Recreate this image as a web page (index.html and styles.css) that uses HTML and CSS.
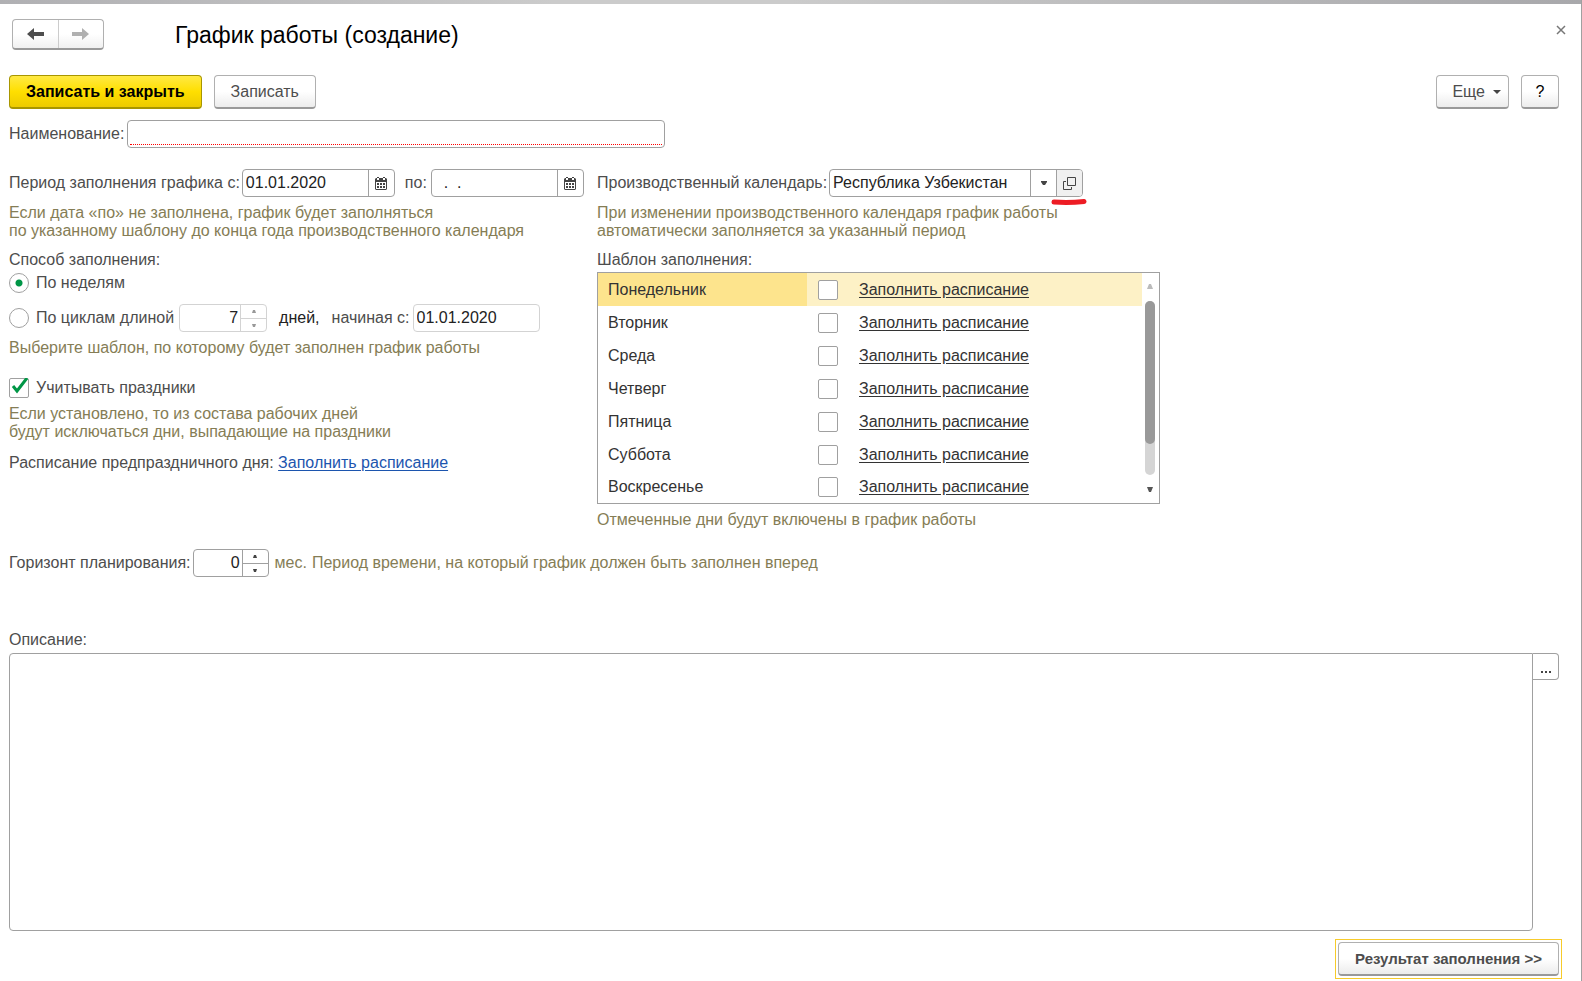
FILE: index.html
```html
<!DOCTYPE html>
<html lang="ru">
<head>
<meta charset="utf-8">
<title>График работы (создание)</title>
<link rel="stylesheet" href="styles.css">
</head>
<body>
<main class="window">
  <header class="titlebar">
    <div class="history">
      <button class="history-btn" type="button" aria-label="Назад"><svg width="18" height="14" viewBox="0 0 18 14"><path d="M0 7 7 1V5H17V9H7V13Z" fill="#4d4d4d"/></svg></button>
      <button class="history-btn" type="button" aria-label="Вперед"><svg width="18" height="14" viewBox="0 0 18 14"><path d="M17 7 10 1V5H0V9H10V13Z" fill="#b0b0b0"/></svg></button>
    </div>
    <h1 class="title">График работы (создание)</h1>
    <button class="close" type="button" aria-label="Закрыть"><svg width="10" height="10" viewBox="0 0 10 10"><path d="M1 1 9 9M9 1 1 9" stroke="#777" stroke-width="1.500"/></svg></button>
  </header>

  <div class="commands">
    <button class="btn btn-primary" type="button">Записать и закрыть</button>
    <button class="btn" type="button">Записать</button>
    <button class="btn btn-more" type="button">Еще <svg width="8" height="4" viewBox="0 0 8 4"><path d="M0 0H8L4 4Z" fill="#444"/></svg></button>
    <button class="btn btn-help" type="button">?</button>
  </div>

  <div class="row name-row">
    <label for="name">Наименование:</label>
    <div class="field name-field"><input class="required" id="name" type="text"></div>
  </div>

  <div class="columns">
    <section class="left">
      <div class="row">
        <label for="from">Период заполнения графика с:</label>
        <div class="field date-field">
          <input id="from" type="text" value="01.01.2020">
          <button class="cell" type="button" aria-label="Выбрать дату начала"><svg width="12" height="13" viewBox="0 0 12 13"><path fill-rule="evenodd" d="M1 1H2V0H4V1H8V0H10V1H11L12 2V12L11 13H1L0 12V2ZM1 5V12H11V5ZM2 1V3H4V1ZM8 1V3H10V1Z" fill="#444"/><path d="M2 6H4V8H2ZM5 6H7V8H5ZM8 6H10V8H8ZM2 9H4V11H2ZM5 9H7V11H5ZM8 9H10V11H8Z" fill="#444"/></svg></button>
        </div>
        <label class="to-label" for="to">по:</label>
        <div class="field date-field">
          <input id="to" type="text" value="  .  .">
          <button class="cell" type="button" aria-label="Выбрать дату окончания"><svg width="12" height="13" viewBox="0 0 12 13"><path fill-rule="evenodd" d="M1 1H2V0H4V1H8V0H10V1H11L12 2V12L11 13H1L0 12V2ZM1 5V12H11V5ZM2 1V3H4V1ZM8 1V3H10V1Z" fill="#444"/><path d="M2 6H4V8H2ZM5 6H7V8H5ZM8 6H10V8H8ZM2 9H4V11H2ZM5 9H7V11H5ZM8 9H10V11H8Z" fill="#444"/></svg></button>
        </div>
      </div>
      <p class="hint period-hint">Если дата «по» не заполнена, график будет заполняться<br>по указанному шаблону до конца года производственного календаря</p>

      <div class="caption" id="mode">Способ заполнения:</div>
      <div class="option" role="radiogroup" aria-labelledby="mode">
        <input class="radio" id="weeks" name="mode" type="radio" checked>
        <label for="weeks">По неделям</label>
      </div>
      <div class="row cycle-row">
        <input class="radio" id="cycles" name="mode" type="radio">
        <label class="cycle-label" for="cycles">По циклам длиной</label>
        <div class="field muted cycle-field">
          <input class="number" type="text" value="7" aria-label="Длина цикла, дней">
          <div class="spin">
            <button type="button" aria-label="Больше"><svg width="4" height="3" viewBox="0 0 4 3"><path d="M0 3 1 0H3L4 3Z" fill="#999"/></svg></button>
            <button type="button" aria-label="Меньше"><svg width="4" height="3" viewBox="0 0 4 3"><path d="M0 0H4L3 3H1Z" fill="#999"/></svg></button>
          </div>
        </div>
        <span class="days">дней,</span>
        <label for="start">начиная с:</label>
        <div class="field muted start-field"><input id="start" type="text" value="01.01.2020"></div>
      </div>
      <p class="hint">Выберите шаблон, по которому будет заполнен график работы</p>

      <div class="option holidays">
        <input class="check" id="holidays" type="checkbox" checked>
        <svg class="tick" width="20" height="20" viewBox="0 0 20 20"><path d="M4 8 8 13 18 0" fill="none" stroke="#009646" stroke-width="3"/></svg>
        <label for="holidays">Учитывать праздники</label>
      </div>
      <p class="hint holidays-hint">Если установлено, то из состава рабочих дней<br>будут исключаться дни, выпадающие на праздники</p>
      <div class="preholiday">Расписание предпраздничного дня: <a class="link" href="#">Заполнить расписание</a></div>
    </section>

    <section class="right">
      <div class="row">
        <label for="calendar">Производственный календарь:</label>
        <div class="field calendar-field">
          <select id="calendar"><option>Республика Узбекистан</option></select>
          <button class="cell" type="button" aria-label="Показать список"><svg width="6" height="4" viewBox="0 0 6 4"><path d="M0 0H6V1L4 4H2L0 1Z" fill="#444"/></svg></button>
          <button class="cell cell-open" type="button" aria-label="Открыть"><svg width="13" height="13" viewBox="0 0 13 13"><path d="M4.500.5H12.500V8.500H4.500ZM3 4.500H.5V12.500H8.500V10" fill="none" stroke="#444"/></svg></button>
          <svg class="marker" width="36" height="6" viewBox="0 0 36 6"><path d="M3 3Q18 4 33 2.500" fill="none" stroke="#ed1c24" stroke-width="5" stroke-linecap="round"/></svg>
        </div>
      </div>
      <p class="hint period-hint">При изменении производственного календаря график работы<br>автоматически заполняется за указанный период</p>
      <div class="caption">Шаблон заполнения:</div>
      <div class="template">
        <table class="days-table">
          <tbody>
            <tr class="selected"><td class="day">Понедельник</td><td class="mark"><input class="check" type="checkbox" aria-label="Понедельник"></td><td><a href="#">Заполнить расписание</a></td></tr>
            <tr><td class="day">Вторник</td><td class="mark"><input class="check" type="checkbox" aria-label="Вторник"></td><td><a href="#">Заполнить расписание</a></td></tr>
            <tr><td class="day">Среда</td><td class="mark"><input class="check" type="checkbox" aria-label="Среда"></td><td><a href="#">Заполнить расписание</a></td></tr>
            <tr><td class="day">Четверг</td><td class="mark"><input class="check" type="checkbox" aria-label="Четверг"></td><td><a href="#">Заполнить расписание</a></td></tr>
            <tr><td class="day">Пятница</td><td class="mark"><input class="check" type="checkbox" aria-label="Пятница"></td><td><a href="#">Заполнить расписание</a></td></tr>
            <tr><td class="day">Суббота</td><td class="mark"><input class="check" type="checkbox" aria-label="Суббота"></td><td><a href="#">Заполнить расписание</a></td></tr>
            <tr><td class="day">Воскресенье</td><td class="mark"><input class="check" type="checkbox" aria-label="Воскресенье"></td><td><a href="#">Заполнить расписание</a></td></tr>
          </tbody>
        </table>
        <div class="scroll">
          <svg width="6" height="5" viewBox="0 0 6 5"><path d="M0 5 2 0H4L6 5Z" fill="#bbb"/></svg>
          <div class="track"><div class="thumb"></div></div>
          <svg width="6" height="5" viewBox="0 0 6 5"><path d="M0 0H6L4 5H2Z" fill="#555"/></svg>
        </div>
      </div>
      <p class="hint template-hint">Отмеченные дни будут включены в график работы</p>
    </section>
  </div>

  <div class="row horizon">
    <label for="horizon">Горизонт планирования:</label>
    <div class="field horizon-field">
      <input class="number" id="horizon" type="text" value="0">
      <div class="spin">
        <button type="button" aria-label="Больше"><svg width="4" height="3" viewBox="0 0 4 3"><path d="M0 3 1 0H3L4 3Z" fill="#444"/></svg></button>
        <button type="button" aria-label="Меньше"><svg width="4" height="3" viewBox="0 0 4 3"><path d="M0 0H4L3 3H1Z" fill="#444"/></svg></button>
      </div>
    </div>
    <span class="hint unit">мес.</span>
    <span class="hint">Период времени, на который график должен быть заполнен вперед</span>
  </div>

  <label class="description-label" for="description">Описание:</label>
  <div class="description">
    <textarea id="description"></textarea>
    <button class="ellipsis" type="button" aria-label="Открыть редактор"><svg width="10" height="2" viewBox="0 0 10 2"><path d="M0 0H2V2H0ZM4 0H6V2H4ZM8 0H10V2H8Z" fill="#444"/></svg></button>
  </div>

  <footer class="footer">
    <div class="focus"><button class="btn btn-result" type="button">Результат заполнения &gt;&gt;</button></div>
  </footer>
</main>
</body>
</html>
```
FILE: styles.css
```css
* {
  box-sizing: border-box;
}

body {
  margin: 0;
  background: #fff;
  color: #4d4d4d;
  font: 16px/18px "Liberation Sans", Arial, sans-serif;
}

button,
input,
select,
textarea {
  margin: 0;
  padding: 0;
  border: 0;
  background: none;
  color: inherit;
  font: inherit;
}

svg {
  display: block;
}

p {
  margin: 0;
}

label {
  white-space: nowrap;
}

.window {
  display: flex;
  flex-direction: column;
  min-height: 100vh;
  padding: 19px 22px 2px 9px;
  border-right: 1px solid #a0a0a0;
  background: linear-gradient(90deg, #b0b0b3, #cbcbcb 35%, #cbcbcb 50%, #a8a8ab) top / 100% 4px no-repeat;
}

.titlebar {
  display: flex;
  align-items: center;
  height: 31px;
  padding-left: 3px;
}

.history {
  display: flex;
  height: 31px;
  border: 1px solid #b0b0b0;
  border-bottom: 2px solid #999;
  border-radius: 4px;
  background: linear-gradient(#fff 50%, #f0f0f0);
}

.history-btn {
  display: grid;
  place-items: center;
  width: 45px;
}

.history-btn + .history-btn {
  border-left: 1px solid #ccc;
}

.title {
  flex: 1;
  margin: 0 0 0 71px;
  color: #000;
  font-size: 23px;
  font-weight: 400;
  line-height: 28px;
}

.close {
  display: grid;
  place-items: center;
  width: 10px;
  height: 10px;
  margin-right: -7px;
  align-self: flex-start;
  margin-top: 6px;
}

.commands {
  display: flex;
  gap: 12px;
  margin-top: 25px;
}

.btn {
  height: 34px;
  padding: 0 16px;
  border: 1px solid #b0b0b0;
  border-bottom: 2px solid #999;
  border-radius: 4px;
  background: linear-gradient(#fff 50%, #ececec);
}

.btn-primary {
  border-color: #a89600;
  background: linear-gradient(#ffe944, #ffdf00 50%, #edcb00);
  color: #000;
  font-weight: 700;
}

.btn-more {
  display: flex;
  align-items: center;
  gap: 8px;
  margin-left: auto;
  padding: 0 7px 0 15px;
}

.btn-help {
  width: 38px;
  padding: 0;
  color: #000;
}

.row {
  display: flex;
  align-items: center;
  height: 28px;
}

.name-row {
  gap: 3px;
  margin-top: 11px;
}

.field {
  display: flex;
  position: relative;
  height: 28px;
  border: 1px solid #a0a0a0;
  border-radius: 4px;
  color: #222;
}

.field input,
.field select {
  flex: 1;
  min-width: 0;
  padding: 0 3px;
  appearance: none;
}

.field .number {
  padding-right: 2px;
  text-align: right;
}

.name-field {
  width: 538px;
  padding: 0 2px 2px;
}

.name-field .required {
  border-bottom: 1px dotted #f00;
}

.muted {
  border-color: #d3d3d3;
}

.cell {
  display: grid;
  place-items: center;
  width: 26px;
  border-left: 1px solid #a0a0a0;
}

.cell-open {
  border-radius: 0 3px 3px 0;
  background: #f0f0f0;
}

.columns {
  display: grid;
  grid-template-columns: 588px minmax(0, 1fr);
  margin-top: 21px;
}

.left .row:first-child,
.right .row:first-child {
  gap: 2px;
}

.date-field {
  width: 153px;
}

.to-label {
  margin: 0 2px 0 8px;
}

.hint {
  color: #857d55;
}

.period-hint {
  margin-top: 7px;
}

.caption {
  margin-top: 11px;
}

.option {
  display: flex;
  position: relative;
  align-items: center;
  gap: 7px;
  height: 20px;
}

.left .option {
  margin-top: 4px;
}

.radio {
  width: 20px;
  height: 20px;
  border: 1px solid #a0a0a0;
  border-radius: 50%;
  appearance: none;
}

.radio:checked {
  background: radial-gradient(circle, #009646 3px, #fff 4px);
}

.check {
  display: block;
  width: 20px;
  height: 20px;
  border: 1px solid #a0a0a0;
  border-radius: 2px;
  background: #fff;
  appearance: none;
}

.tick {
  position: absolute;
  top: 0;
  left: 0;
  pointer-events: none;
}

.cycle-row {
  margin-top: 11px;
}

.cycle-label {
  margin: 0 5px 0 7px;
}

.cycle-field {
  width: 88px;
}

.days {
  margin: 0 12px;
  color: #222;
}

.start-field {
  width: 127px;
  margin-left: 3px;
}

.cycle-row + .hint {
  margin-top: 7px;
}

.spin {
  display: grid;
  grid-template-rows: 1fr 1fr;
  width: 26px;
  border-left: 1px solid #a0a0a0;
}

.spin button {
  display: grid;
  place-items: center;
}

.spin button + button {
  border-top: 1px solid #a0a0a0;
}

.muted .spin,
.muted .spin button + button {
  border-color: #d3d3d3;
}

.left .holidays {
  margin-top: 21px;
}

.holidays-hint {
  margin-top: 7px;
}

.preholiday {
  margin-top: 13px;
}

.link {
  color: #1c55ae;
  text-underline-offset: 2px;
}

.calendar-field {
  width: 254px;
}

.marker {
  position: absolute;
  top: 29px;
  right: -5px;
}

.template {
  display: flex;
  width: 563px;
  margin-top: 3px;
  border: 1px solid #a0a0a0;
}

.days-table {
  flex: 1;
  border-collapse: collapse;
  color: #333;
}

.days-table td {
  height: 33px;
  padding: 0;
}

.days-table tr:last-child td {
  height: 32px;
}

.days-table .day {
  width: 209px;
  padding-left: 10px;
}

.days-table .mark {
  width: 52px;
  padding-left: 11px;
}

.days-table a {
  color: inherit;
  text-underline-offset: 2px;
}

.selected {
  background: #fdf1c6;
}

.selected .day {
  background: #fde48d;
}

.scroll {
  display: flex;
  flex-direction: column;
  align-items: center;
  gap: 12px;
  width: 17px;
  padding: 11px 1px 11px 0;
}

.track {
  flex: 1;
  width: 10px;
  border-radius: 5px;
  background: #d5d5d5;
}

.thumb {
  height: 82%;
  border-radius: 5px;
  background: #999;
}

.template-hint {
  margin-top: 7px;
}

.horizon {
  gap: 2px;
  margin-top: 20px;
}

.horizon-field {
  width: 76px;
}

.unit {
  margin: 0 3px 0 4px;
}

.description-label {
  margin-top: 54px;
}

.description {
  display: flex;
  flex: 1;
  align-items: flex-start;
  margin-top: 4px;
}

.description textarea {
  flex: 1;
  align-self: stretch;
  min-height: 120px;
  border: 1px solid #a0a0a0;
  border-radius: 4px 0 4px 4px;
  resize: none;
}

.ellipsis {
  display: grid;
  place-items: center;
  width: 26px;
  height: 27px;
  padding-top: 10px;
  border: 1px solid #a0a0a0;
  border-left: 0;
  border-radius: 0 4px 4px 0;
}

.footer {
  display: flex;
  justify-content: flex-end;
  margin: 8px -3px 0 0;
}

.focus {
  padding: 2px;
  border: 1px solid #f7cb2b;
}

.btn-result {
  display: block;
  font-size: 15px;
  font-weight: 700;
}
```
